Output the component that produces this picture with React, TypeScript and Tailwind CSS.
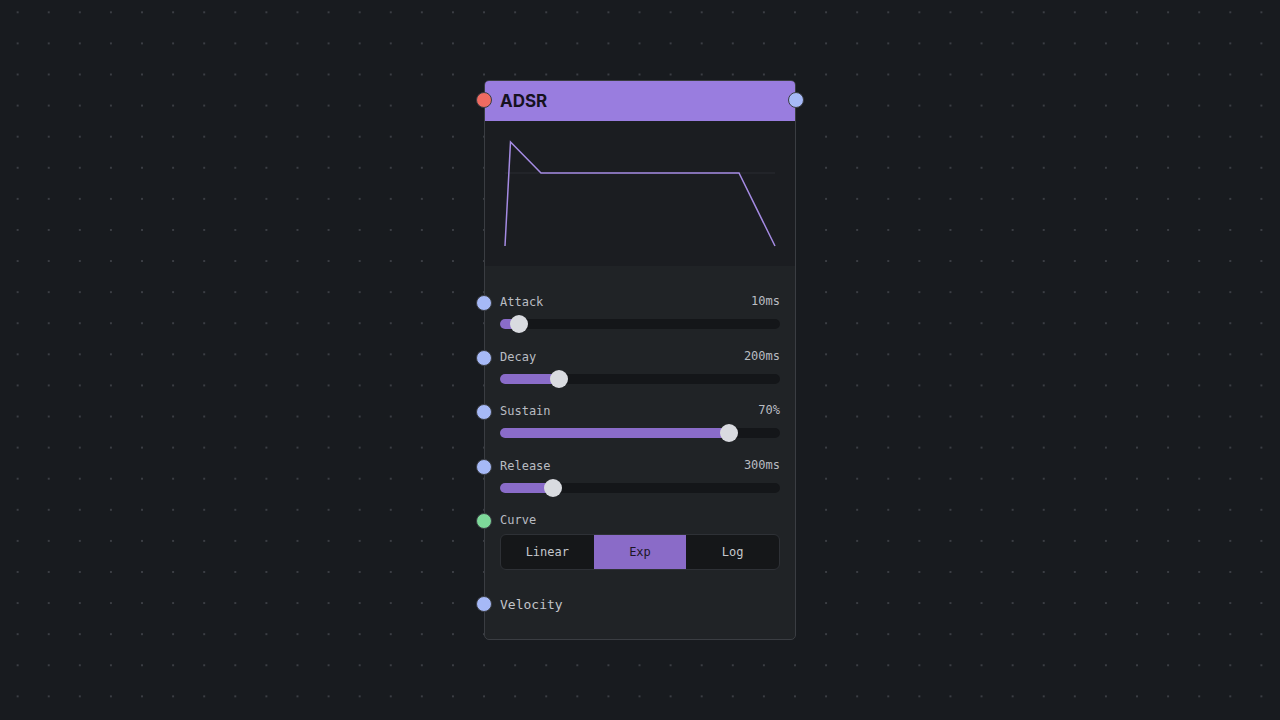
import React from "react";

type Param = {
  label: string;
  value: string;
  pos: number; // thumb centre as a fraction of the track
};

const params: Param[] = [
  { label: "Attack", value: "10ms", pos: 0.068 },
  { label: "Decay", value: "200ms", pos: 0.21 },
  { label: "Sustain", value: "70%", pos: 0.818 },
  { label: "Release", value: "300ms", pos: 0.189 },
];

const curves = ["Linear", "Exp", "Log"];

// connection dot sitting on the node's edge
function Handle({ color, className = "" }: { color: string; className?: string }) {
  return (
    <span
      className={`absolute h-[16px] w-[16px] rounded-full border-[1.5px] border-[#3a3d43] ${color} ${className}`}
    />
  );
}

function Slider({ p }: { p: Param }) {
  return (
    <div className="relative flex flex-col gap-[9px]">
      <Handle color="bg-[#a6b9f7]" className="-left-[24px] top-[2px]" />
      <div className="flex h-[17px] items-start justify-between text-[12px] text-[#b9bcc2]">
        <span className="self-end leading-4">{p.label}</span>
        <span className="leading-4">{p.value}</span>
      </div>
      <div className="relative h-[10px] rounded-full bg-[#141619]">
        <div
          className="absolute inset-y-0 left-0 rounded-full bg-[#8a6cc9]"
          style={{ width: `${p.pos * 100}%` }}
        />
        <div
          className="absolute top-1/2 h-[18px] w-[18px] -translate-x-1/2 -translate-y-1/2 rounded-full bg-[#d9dbe0]"
          style={{ left: `${p.pos * 100}%` }}
        />
      </div>
    </div>
  );
}

function Envelope() {
  return (
    <div className="h-[145px] bg-[#1b1d21]">
      <svg width="310" height="145" viewBox="0 0 310 145">
        <line x1="20" y1="52" x2="290" y2="52" stroke="#2a2d32" strokeWidth="1" />
        <polyline
          points="20,125 25.5,21 56,52 254,52 290,125"
          fill="none"
          stroke="#a58be3"
          strokeWidth="1.5"
        />
      </svg>
    </div>
  );
}

export default function App() {
  return (
    <div className="flex h-screen w-full items-center justify-center bg-[#181b1f] bg-[radial-gradient(circle,#3b3e44_0.9px,transparent_1.3px)] bg-[size:31.1px_31.1px] bg-[position:2.1px_-3.25px] font-['DejaVu_Sans_Mono',monospace]">
      <div className="flex h-[560px] w-[312px] flex-col rounded-[5px] border border-[#3a3d42] bg-[#202326]">
        <div className="relative flex h-[40px] items-center rounded-t-[4px] bg-[#997ddf] px-[15px] pt-[2px]">
          <Handle color="bg-[#f06b61]" className="-left-[9px] top-[11px]" />
          <span className="font-['Inter',sans-serif] text-[17px] font-bold text-[#16121f]">ADSR</span>
          <Handle color="bg-[#a6b9f7]" className="-right-[9px] top-[11px]" />
        </div>

        <Envelope />

        <div className="flex flex-col px-[15px] pt-[27px]">
          <div className="flex flex-col gap-[18.5px]">
            {params.map((p) => (
              <Slider key={p.label} p={p} />
            ))}

            <div className="relative flex flex-col gap-[6px]">
              <Handle color="bg-[#7ed99a]" className="-left-[24px] top-[2px]" />
              <div className="flex h-[17px] items-end text-[12px] leading-4 text-[#b9bcc2]">Curve</div>
              <div className="grid h-[36px] grid-cols-3 overflow-hidden rounded-[6px] border border-[#2e3136] bg-[#151719]">
                {curves.map((c) => (
                  <div
                    key={c}
                    className={`flex items-center justify-center text-[12px] ${
                      c === "Exp" ? "bg-[#8a6bc8] text-[#1c1726]" : "text-[#c4c7cc]"
                    }`}
                  >
                    {c}
                  </div>
                ))}
              </div>
            </div>
          </div>

          <div className="relative mt-[26px] flex h-[18px] items-center">
            <Handle color="bg-[#a6b9f7]" className="-left-[24px] top-0" />
            <span className="text-[13px] leading-[18px] text-[#c2c5ca]">Velocity</span>
          </div>
        </div>
      </div>
    </div>
  );
}
